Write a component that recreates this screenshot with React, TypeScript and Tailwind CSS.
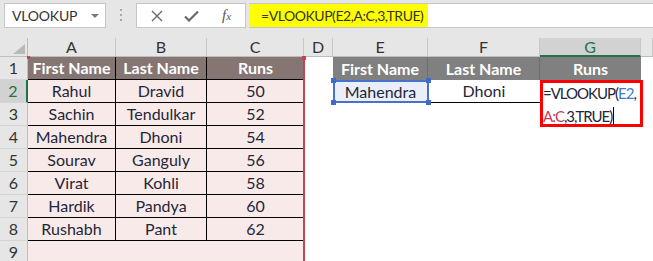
import React from 'react';

const COLS = ['A', 'B', 'C', 'D', 'E', 'F', 'G', ''];
const DATA: [string, string, string][] = [
  ['Rahul', 'Dravid', '50'],
  ['Sachin', 'Tendulkar', '52'],
  ['Mahendra', 'Dhoni', '54'],
  ['Sourav', 'Ganguly', '56'],
  ['Virat', 'Kohli', '58'],
  ['Hardik', 'Pandya', '60'],
  ['Rushabh', 'Pant', '62'],
];

function Cell({ className = '', children }: { className?: string; children?: React.ReactNode }) {
  return <div className={`flex h-[23px] items-center justify-center overflow-visible whitespace-nowrap ${className}`}>{children}</div>;
}

function RowHead({ n }: { n: number }) {
  const active = n === 2;
  return (
    <div
      className={`flex h-[23px] items-center justify-center border-b border-[#d4d4d4] text-[16px] ${
        active ? 'border-r-2 border-r-[#217346] bg-[#d2d2d2] text-[#217346]' : 'border-r border-r-[#bdbdbd] bg-[#e6e6e6] text-[#333]'
      }`}
    >
      {n}
    </div>
  );
}

export default function App() {
  const rows: React.ReactNode[] = [];

  // row 1: headers
  rows.push(
    <React.Fragment key="r1">
      <RowHead n={1} />
      <Cell className="border-b border-r border-black bg-[#857674] font-bold text-white">First Name</Cell>
      <Cell className="border-b border-r border-black bg-[#857674] font-bold text-white">Last Name</Cell>
      <Cell className="border-b border-black bg-[#857674] font-bold text-white">Runs</Cell>
      <Cell />
      <Cell className="border-r border-[#6e6e6e] bg-[#808080] font-bold text-white">First Name</Cell>
      <Cell className="border-r border-[#6e6e6e] bg-[#808080] font-bold text-white">Last Name</Cell>
      <Cell className="bg-[#808080] font-bold text-white">Runs</Cell>
      <Cell />
    </React.Fragment>
  );

  DATA.forEach((d, i) => {
    const n = i + 2;
    rows.push(
      <React.Fragment key={n}>
        <RowHead n={n} />
        <Cell className="border-b border-r border-black bg-[#f9eaea]">{d[0]}</Cell>
        <Cell className="border-b border-r border-black bg-[#f9eaea]">{d[1]}</Cell>
        <Cell className="border-b border-black bg-[#f9eaea]">{d[2]}</Cell>
        <Cell />
        {n === 2 ? (
          <>
            <Cell className="bg-[#e9eef8]">Mahendra</Cell>
            <Cell className="border-b border-black">Dhoni</Cell>
            <Cell />
          </>
        ) : (
          <>
            <Cell />
            <Cell />
            <Cell />
          </>
        )}
        <Cell />
      </React.Fragment>
    );
  });

  rows.push(
    <React.Fragment key="r9">
      <RowHead n={9} />
      <Cell className="bg-[#f9eaea]" />
      <Cell className="bg-[#f9eaea]" />
      <Cell className="bg-[#f9eaea]" />
      <Cell />
      <Cell />
      <Cell />
      <Cell />
      <Cell />
    </React.Fragment>
  );

  return (
    <div className="h-[261px] w-[653px] overflow-hidden bg-white font-['Lato','Liberation_Sans',sans-serif] text-[#1f2638]">
      {/* top bar */}
      <div className="flex h-[38px] items-start bg-[#e6e6e6] pt-[3px]">
        <div className="relative ml-[4px] flex h-[25px] w-[102px] items-center border border-[#c6c6c6] bg-white pl-[7px] text-[14px] tracking-[-0.2px] text-[#333]">
          VLOOKUP
          <span className="absolute right-[6px] top-[10px] h-0 w-0 border-x-[4px] border-t-[4px] border-x-transparent border-t-[#7a7a7a]" />
        </div>
        <div className="flex w-[30px] flex-col items-center gap-[3px] pt-[6px]">
          <span className="h-[2px] w-[2px] bg-[#a8a8a8]" />
          <span className="h-[2px] w-[2px] bg-[#a8a8a8]" />
          <span className="h-[2px] w-[2px] bg-[#a8a8a8]" />
        </div>
        <div className="flex h-[25px] w-[110px] items-center border border-[#c6c6c6] bg-white pl-[14px]">
          <svg width="12" height="12" viewBox="0 0 12 12" className="text-[#6a6a6a]">
            <path d="M1 1 L11 11 M11 1 L1 11" stroke="currentColor" strokeWidth="1.4" />
          </svg>
          <svg width="15" height="12" viewBox="0 0 15 12" className="ml-[21px] text-[#6a6a6a]">
            <path d="M1 6.5 L5 10.5 L14 1.5" stroke="currentColor" strokeWidth="2.2" fill="none" />
          </svg>
          <span className="ml-[23px] font-['Liberation_Serif',serif] text-[15px] italic text-[#555]">
            f<span className="text-[11px]">x</span>
          </span>
        </div>
        <div className="ml-[3px] flex h-[25px] flex-1 items-stretch border-y border-[#c6c6c6] bg-white">
          <div className="flex w-[179px] items-center bg-[#ffff00] pl-[12px] text-[14px] tracking-[-0.45px] text-[#333]">=VLOOKUP(E2,A:C,3,TRUE)</div>
        </div>
      </div>

      {/* sheet */}
      <div className="relative">
        <div className="grid grid-cols-[28px_88px_91px_97px_29px_95px_112px_101px_12px] text-[16px]">
          {/* column headers */}
          <div className="relative h-[19px] border-b border-r border-[#bdbdbd] bg-[#e6e6e6]">
            <svg width="12" height="10" viewBox="0 0 12 10" className="absolute left-[13px] top-[6px]">
              <path d="M12 0 L12 10 L0 10 Z" fill="#b9b9b9" />
            </svg>
          </div>
          {COLS.map((c) => (
            <div
              key={c || 'H'}
              className={`flex h-[19px] items-center justify-center border-r border-[#c8c8c8] text-[16px] ${
                c === 'G' ? 'border-b-2 border-b-[#217346] bg-[#d2d2d2] text-[#217346]' : 'border-b border-b-[#bdbdbd] bg-[#e6e6e6] text-[#333]'
              }`}
            >
              {c}
            </div>
          ))}
          {rows}
        </div>

        {/* A:C range highlight */}
        <div className="absolute left-[303px] top-[19px] h-[260px] w-[2px] bg-[#c8424c]" />
        <div className="absolute left-[27px] top-[18px] h-[3px] w-[3px] bg-[#c8424c]" />
        <div className="absolute left-[302px] top-[18px] h-[4px] w-[4px] bg-[#c8424c]" />

        {/* E2 selection */}
        <div className="absolute left-[333px] top-[42px] h-[23px] w-[96px] border-2 border-[#4673c9]" />
        {[
          'left-[331px] top-[40px]',
          'left-[426px] top-[40px]',
          'left-[331px] top-[62px]',
          'left-[426px] top-[62px]',
        ].map((p) => (
          <span key={p} className={`absolute h-[5px] w-[5px] bg-[#3f6cc2] ${p}`} />
        ))}

        {/* G2 editing cell */}
        <div className="absolute left-[540px] top-[42px] h-[47px] w-[103px] border-[3px] border-[#ff0000] bg-white text-[15px] leading-[21px] tracking-[-1px] text-[#1f2638]">
          <div className="whitespace-nowrap">
            =VLOOKUP(<span className="text-[#3b7bd1]">E2</span>,
          </div>
          <div className="whitespace-nowrap">
            <span className="text-[#c93a57]">A:C</span>,3,TRUE)
            <span className="ml-[1px] inline-block h-[18px] w-[1px] translate-y-[3px] bg-black" />
          </div>
        </div>
      </div>
    </div>
  );
}
